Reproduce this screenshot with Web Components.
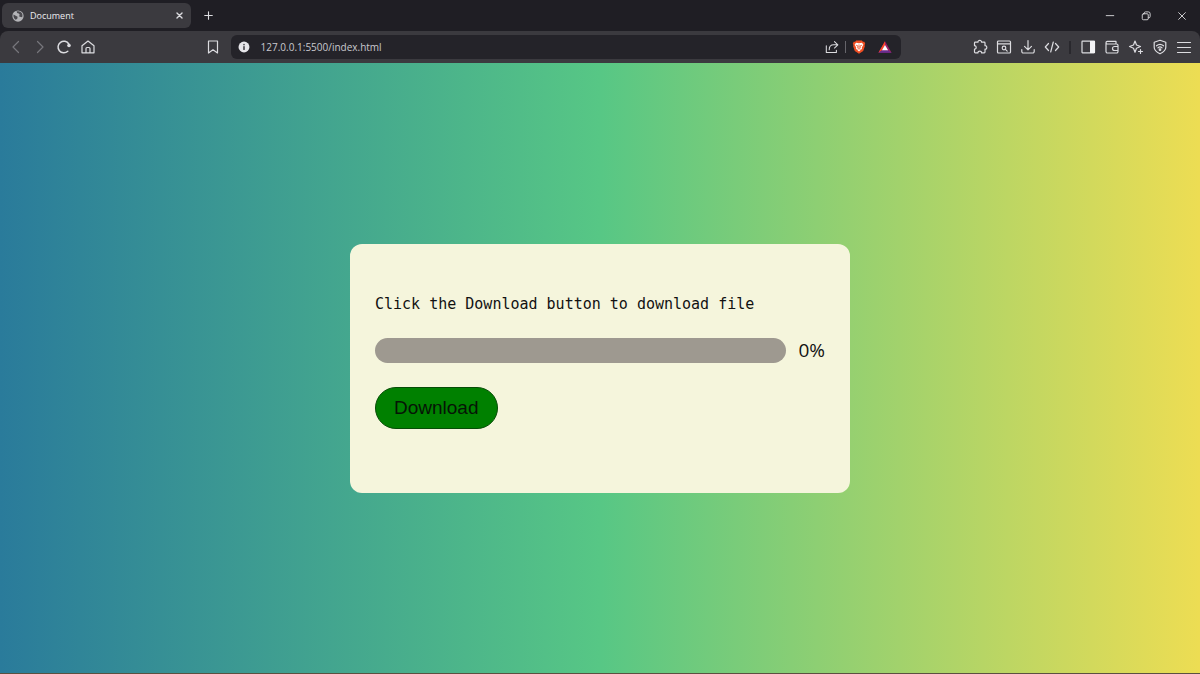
<!DOCTYPE html>
<html lang="en">
<head>
<meta charset="UTF-8">
<meta name="viewport" content="width=device-width, initial-scale=1.0">
<title>Document</title>
<style>
	html, body{
		height: 100%;
		margin: 0;
	}
	body{
		font-family: "Open Sans", "Noto Sans", sans-serif;
	}
</style>
</head>
<body>
<browser-window>
	<tab-strip slot="tabs" label="Document"></tab-strip>
	<nav-bar slot="toolbar" url="127.0.0.1:5500/index.html"></nav-bar>
	<download-card value="0">Click the Download button to download file</download-card>
</browser-window>

<script>
const ICONS = {
	globe: `<circle cx="8" cy="8" r="7.5" fill="#b4b4b8" stroke="none"/><path d="M2 6l3 1.500 2.500 1.500-.5 2.500-2 1.500C3 12 1.500 9 2 6zM6 2l1 2 2 .5 1.500 2L9 8l1.500 1 3 .5c1-2 .5-5-1.500-6.500C10 1.500 8 1.200 6 2z" fill="#4a494e" stroke="none"/>`,
	close: `<path d="M3.500 3.500l9 9M12.500 3.500l-9 9"/>`,
	plus: `<path d="M8 2.500v11M2.500 8h11"/>`,
	minimize: `<path d="M3 7.500h10"/>`,
	restore: `<rect x="3" y="5" width="8" height="8" rx="1.500"/><path d="M5.500 5V4.500a2 2 0 0 1 2-2H11a2.500 2.500 0 0 1 2.500 2.500v3.500a2 2 0 0 1-2 2H11"/>`,
	back: `<path d="M10.500 2.500L5 8l5.500 5.500"/>`,
	forward: `<path d="M5.500 2.500L11 8l-5.500 5.500"/>`,
	reload: `<path d="M11.800 12.300A5.800 5.800 0 1 1 12.800 5" stroke-width="1.500"/><circle cx="13" cy="6.500" r="1.800" fill="currentColor" stroke="none"/>`,
	home: `<path d="M2 6.800L8 2l6 4.800v7H2zM6 13.800V9.500a1 1 0 0 1 1-1h2a1 1 0 0 1 1 1v4.300"/>`,
	bookmark: `<path d="M3.500 2h9v12L8 10.800 3.500 14z"/>`,
	info: `<circle cx="8" cy="8" r="7.300" fill="#e6e6ea" stroke="none"/><path d="M8 7.400v3.800M8 4.500v.5" stroke="#26252b" stroke-width="1.800"/>`,
	share: `<path d="M1.500 6.500v7.800h11.500v-2.600M10.800 1.800L14.700 5.500l-3.900 3.700M14.500 5.500H10C6.500 5.500 4.800 8 4.800 11.200"/>`,
	brave: `<path d="M4.800.5h6.400l1.300 1.400 1.600.1 1 2.200-.7 1.600.3 1.200-1.900 5.600L8 15.700l-4.800-3.100L1.300 7l.3-1.200L.9 4.200 1.900 2l1.600-.1z" fill="#f04e23" stroke="none"/><path d="M4.600 3.200L8 3.700l3.400-.5L13 5.300l-1.800 3.400.2 1.300L8 13 4.600 10l.2-1.300L3 5.300z" fill="#fff" stroke="none"/><path d="M4.800 6l2 .8L6.500 9M11.200 6l-2 .8.3 2.200M8 5.500v3.800M6.800 10.500L8 9.800l1.200.7" stroke="#f04e23" stroke-width=".9"/>`,
	bat: `<path d="M8 1.500L.5 14.500h15z" fill="#9e1f63" stroke="none"/><path d="M8 1.500L.5 14.500 4.500 11.800 8 5.800z" fill="#ff4724" stroke="none"/><path d="M.5 14.500h15l-4-2.700h-7z" fill="#662d91" stroke="none"/><path d="M8 5.800l-3.500 6h7z" fill="#fff" stroke="none"/>`,
	puzzle: `<path d="M3.300 3.200H6C5.600.8 9.900.8 9.500 3.200h2.700a.8.8 0 0 1 .8.8v2.700c2.400-.4 2.400 3.900 0 3.500V13a.8.8 0 0 1-.8.8H9.500c.2-2.200-3.700-2.200-3.500 0H3.300a.8.8 0 0 1-.8-.8v-2.800c2.200.2 2.200-3.700 0-3.500V4a.8.8 0 0 1 .8-.8z"/>`,
	search: `<rect x="1.500" y="2" width="13" height="12" rx="1"/><path d="M1.500 4.800h13M9.200 10.200l2 2"/><circle cx="8" cy="9" r="1.800"/>`,
	download: `<path d="M8 1.500v9M4.500 7.300L8 10.800l3.500-3.500M1.800 10.500v2a1.500 1.500 0 0 0 1.500 1.500h9.400a1.500 1.500 0 0 0 1.500-1.500v-2"/>`,
	code: `<path d="M4.500 4.500L1.300 8l3.200 3.500M11.500 4.500L14.700 8l-3.200 3.500M9.300 3L6.700 13"/>`,
	sidebar: `<rect x="2" y="2.200" width="12.500" height="11.600" rx=".5"/><path d="M10 2h5v12h-5z" fill="#f4f4f6" stroke="none"/>`,
	wallet: `<path d="M2 4v8.500A1.500 1.500 0 0 0 3.500 14h9a1.500 1.500 0 0 0 1.500-1.500v-6A1.500 1.500 0 0 0 12.500 5H3.300a1.300 1.300 0 0 1 0-2.600H12V5M14 7.500h-3.500a2 2 0 0 0 0 4H14"/>`,
	sparkle: `<path d="M7 2l1.500 4L12.500 7.500l-4 1.700L7 13.200 5.500 9.200 1.500 7.500l4-1.500z"/><path d="M12.500 10.500v4M10.500 12.500h4"/>`,
	shield: `<path d="M8 1.300l5.800 2v5c0 3-2.600 5-5.800 6.500C4.800 13.300 2.200 11.300 2.200 8.300v-5z"/><path d="M4.500 6.800c2-1.600 5-1.600 7 0M6 8.800c1.200-1 2.800-1 4 0"/><circle cx="8" cy="10.700" r=".8" fill="currentColor"/>`,
	menu: `<path d="M1.500 3.500h13M1.500 8.500h13M1.500 13.500h13"/>`
}

/**
 * @element ui-icon
 * @attribute name one of the keys of ICONS
 */
class UiIcon extends HTMLElement{
	constructor(){
		super()
		this.attachShadow({mode: "open"})
	}
	connectedCallback(){
		this.shadowRoot.innerHTML = `
			<style>
				:host{
					display: block;
					width: var(--icon-size, 16px);
					height: var(--icon-size, 16px);
				}
				svg{
					display: block;
					width: 100%;
					height: 100%;
					fill: none;
					stroke: currentColor;
					stroke-width: var(--icon-stroke, 1.2);
					stroke-linejoin: round;
					stroke-linecap: round;
				}
			</style>
			<svg viewBox="0 0 16 16" aria-hidden="true">${ICONS[this.getAttribute("name")] || ""}</svg>
		`
	}
}

/**
 * @element icon-button
 * @attribute icon
 * @attribute label accessible name
 * @attribute disabled
 */
class IconButton extends HTMLElement{
	constructor(){
		super()
		this.attachShadow({mode: "open"})
	}
	connectedCallback(){
		this.shadowRoot.innerHTML = `
			<style>
				:host{
					display: flex;
					flex: none;
				}
				button{
					display: flex;
					align-items: center;
					justify-content: center;
					width: var(--button-width, 24px);
					height: 24px;
					padding: 0;
					border: 0;
					border-radius: 4px;
					background: none;
					color: #dcdce0;
				}
				button:hover{ background: rgba(255, 255, 255, .08) }
				button:disabled{ color: #77767c }
			</style>
			<button type="button" ${this.hasAttribute("disabled") ? "disabled" : ""}>
				<ui-icon name="${this.getAttribute("icon")}"></ui-icon>
			</button>
		`
		this.shadowRoot.querySelector("button").setAttribute("aria-label", this.getAttribute("label"))
	}
}

/**
 * @element browser-window
 * @slot tabs
 * @slot toolbar
 * @slot the page
 */
class BrowserWindow extends HTMLElement{
	constructor(){
		super()
		this.attachShadow({mode: "open"}).innerHTML = `
			<style>
				:host{
					display: flex;
					flex-direction: column;
					min-height: 100%;
					box-sizing: border-box;
					border-bottom: 1px solid #5a5140;
					background: #1f1e24;
				}
				main{
					flex: 1;
					display: flex;
					align-items: center;
					justify-content: center;
					background: linear-gradient(90deg, #2a7b9b 0%, #57c785 50%, #eddd53 100%);
				}
			</style>
			<slot name="tabs"></slot>
			<slot name="toolbar"></slot>
			<main><slot></slot></main>
		`
	}
}

/**
 * @element tab-strip
 * @attribute label title of the open tab
 */
class TabStrip extends HTMLElement{
	constructor(){
		super()
		this.attachShadow({mode: "open"}).innerHTML = `
			<style>
				:host{
					display: flex;
					align-items: center;
					height: 31px;
					padding-left: 2px;
					color: #ececf0;
				}
				.tab{
					display: flex;
					align-items: center;
					box-sizing: border-box;
					width: 189px;
					height: 25px;
					padding-left: 10px;
					border-radius: 6px;
					background: #3b3a3f;
					font-size: 9px;
				}
				.tab ui-icon{ --icon-size: 12px }
				.title{
					flex: 1;
					margin-left: 6px;
				}
				.tab icon-button{
					--icon-size: 9px;
					--icon-stroke: 2.4;
				}
				.new{
					--icon-size: 11px;
					--icon-stroke: 1.6;
					margin-left: 5px;
				}
				.controls{
					display: flex;
					margin-left: auto;
					--button-width: 36px;
					--icon-size: 12px;
				}
			</style>
			<div class="tab">
				<ui-icon name="globe"></ui-icon>
				<span class="title"></span>
				<icon-button icon="close" label="Close tab"></icon-button>
			</div>
			<icon-button class="new" icon="plus" label="New tab"></icon-button>
			<div class="controls">
				<icon-button icon="minimize" label="Minimize"></icon-button>
				<icon-button icon="restore" label="Restore"></icon-button>
				<icon-button icon="close" label="Close"></icon-button>
			</div>
		`
	}
	connectedCallback(){
		this.shadowRoot.querySelector(".title").textContent = this.getAttribute("label")
	}
}

/**
 * @element nav-bar
 * @attribute url
 */
class NavBar extends HTMLElement{
	constructor(){
		super()
		this.attachShadow({mode: "open"}).innerHTML = `
			<style>
				:host{
					display: flex;
					align-items: center;
					height: 32px;
					padding: 0 4px;
					border-radius: 8px 8px 0 0;
					background: #3b3a3f;
				}
				.gap-left{ flex: 3 }
				.gap-right{ flex: 2 }
				.address{
					flex: 20;
					display: flex;
					align-items: center;
					min-width: 0;
					height: 24px;
					margin-left: 6px;
					border-radius: 6px;
					background: #242329;
					--button-width: 26px;
				}
				.address > ui-icon{
					--icon-size: 12px;
					margin-left: 7px;
				}
				.address icon-button{ --icon-size: 14px }
				.address icon-button:last-child{ margin-right: 3px }
				input{
					flex: 1;
					min-width: 0;
					margin: 0 0 0 11px;
					padding: 0;
					border: 0;
					outline: 0;
					background: none;
					color: #c9c9ce;
					font: 10px "Open Sans", "Noto Sans", sans-serif;
				}
				.line{
					width: 1px;
					height: 12px;
					background: #66656b;
				}
				.separator{
					width: 2px;
					height: 13px;
					margin: 0 5px;
					background: #29282d;
				}
			</style>
			<icon-button icon="back" label="Back" disabled></icon-button>
			<icon-button icon="forward" label="Forward" disabled></icon-button>
			<icon-button icon="reload" label="Reload"></icon-button>
			<icon-button icon="home" label="Home"></icon-button>
			<div class="gap-left"></div>
			<icon-button icon="bookmark" label="Bookmark this page"></icon-button>
			<div class="address">
				<ui-icon name="info"></ui-icon>
				<input type="text" aria-label="Address" spellcheck="false">
				<icon-button icon="share" label="Share"></icon-button>
				<span class="line"></span>
				<icon-button icon="brave" label="Shields"></icon-button>
				<icon-button icon="bat" label="Rewards"></icon-button>
			</div>
			<div class="gap-right"></div>
			<icon-button icon="puzzle" label="Extensions"></icon-button>
			<icon-button icon="search" label="Search tabs"></icon-button>
			<icon-button icon="download" label="Downloads"></icon-button>
			<icon-button icon="code" label="Developer tools"></icon-button>
			<span class="separator"></span>
			<icon-button icon="sidebar" label="Sidebar"></icon-button>
			<icon-button icon="wallet" label="Wallet"></icon-button>
			<icon-button icon="sparkle" label="Assistant"></icon-button>
			<icon-button icon="shield" label="VPN"></icon-button>
			<icon-button icon="menu" label="Menu"></icon-button>
		`
	}
	connectedCallback(){
		this.shadowRoot.querySelector("input").value = this.getAttribute("url")
	}
}

/**
 * @element download-card
 * @slot the message above the bar
 * @attribute value progress in percent
 */
class DownloadCard extends HTMLElement{
	#timer = null
	static get observedAttributes(){
		return ["value"]
	}
	constructor(){
		super()
		this.attachShadow({mode: "open"}).innerHTML = `
			<style>
				:host{
					display: flex;
					flex-direction: column;
					align-items: flex-start;
					gap: 24px;
					box-sizing: border-box;
					width: 500px;
					max-width: 100%;
					padding: 50px 25px 64px;
					border-radius: 12px;
					background: beige;
					color: #111;
				}
				p{
					margin: 0;
					font: 15px/20px "DejaVu Sans Mono", monospace;
				}
				.progress{
					display: flex;
					align-items: center;
					gap: 12px;
					width: 100%;
				}
				.bar{
					flex: 1;
					height: 25px;
					border-radius: 13px;
					overflow: hidden;
					background: #9e9990;
				}
				.fill{
					width: 0;
					height: 100%;
					background: green;
				}
				.percent{
					font-size: 19px;
					line-height: 25px;
				}
				button{
					padding: 8px 18px;
					border: 1px solid #064d06;
					border-radius: 21px;
					background: green;
					color: #061406;
					font: 19px/24px "Liberation Sans", Arial, sans-serif;
				}
			</style>
			<p><slot></slot></p>
			<div class="progress">
				<div class="bar" role="progressbar" aria-label="Download progress"><div class="fill"></div></div>
				<span class="percent"></span>
			</div>
			<button type="button">Download</button>
		`
		this.shadowRoot.querySelector("button").addEventListener("click", () => this.start())
	}
	start(){
		clearInterval(this.#timer)
		this.setAttribute("value", 0)
		this.#timer = setInterval(() => {
			let next = Number(this.getAttribute("value")) + 1
			this.setAttribute("value", next)
			if(next >= 100){
				clearInterval(this.#timer)
			}
		}, 50)
	}
	attributeChangedCallback(name, oldValue, newValue){
		this.shadowRoot.querySelector(".fill").style.width = newValue + "%"
		this.shadowRoot.querySelector(".percent").textContent = newValue + "%"
		this.shadowRoot.querySelector(".bar").setAttribute("aria-valuenow", newValue)
	}
	disconnectedCallback(){
		clearInterval(this.#timer)
	}
}

customElements.define("ui-icon", UiIcon)
customElements.define("icon-button", IconButton)
customElements.define("browser-window", BrowserWindow)
customElements.define("tab-strip", TabStrip)
customElements.define("nav-bar", NavBar)
customElements.define("download-card", DownloadCard)
</script>
</body>
</html>
